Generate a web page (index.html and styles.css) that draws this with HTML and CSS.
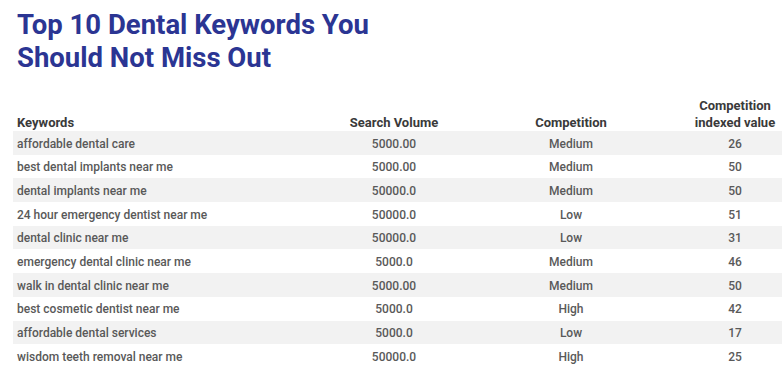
FILE: index.html
```html
<!DOCTYPE html>
<html>
<head>
<meta charset="utf-8">
<link rel="stylesheet" href="styles.css">
</head>
<body>
<div class="page">
  <h1 class="title">Top 10 Dental Keywords You<br>Should Not Miss Out</h1>
  <table class="kw-table">
    <colgroup>
      <col class="c-kw"><col class="c-vol"><col class="c-comp"><col class="c-idx">
    </colgroup>
    <thead>
      <tr>
        <th class="left">Keywords</th>
        <th>Search Volume</th>
        <th>Competition</th>
        <th>Competition<br>indexed value</th>
      </tr>
    </thead>
    <tbody>
      <tr class="alt"><td class="left">affordable dental care</td><td>5000.00</td><td>Medium</td><td>26</td></tr>
      <tr><td class="left">best dental implants near me</td><td>5000.00</td><td>Medium</td><td>50</td></tr>
      <tr class="alt"><td class="left">dental implants near me</td><td>50000.0</td><td>Medium</td><td>50</td></tr>
      <tr><td class="left">24 hour emergency dentist near me</td><td>50000.0</td><td>Low</td><td>51</td></tr>
      <tr class="alt"><td class="left">dental clinic near me</td><td>50000.0</td><td>Low</td><td>31</td></tr>
      <tr><td class="left">emergency dental clinic near me</td><td>5000.0</td><td>Medium</td><td>46</td></tr>
      <tr class="alt"><td class="left">walk in dental clinic near me</td><td>5000.00</td><td>Medium</td><td>50</td></tr>
      <tr><td class="left">best cosmetic dentist near me</td><td>5000.0</td><td>High</td><td>42</td></tr>
      <tr class="alt"><td class="left">affordable dental services</td><td>5000.0</td><td>Low</td><td>17</td></tr>
      <tr><td class="left">wisdom teeth removal near me</td><td>50000.0</td><td>High</td><td>25</td></tr>
    </tbody>
  </table>
</div>
</body>
</html>
```

FILE: styles.css
```css
html, body {
  margin: 0;
  padding: 0;
  background: #ffffff;
}

.page {
  padding: 8px 0 0 13px;
  font-family: Roboto, "Liberation Sans", sans-serif;
}

.title {
  margin: 0 0 23px 4px;
  font-size: 27.5px;
  line-height: 33px;
  font-weight: 700;
  color: #2b3593;
}

.kw-table {
  width: 769px;
  border-collapse: collapse;
  table-layout: fixed;
}

.c-kw { width: 321px; }
.c-vol { width: 120px; }
.c-comp { width: 234px; }
.c-idx { width: 94px; }

.kw-table th {
  font-size: 13px;
  font-weight: 700;
  color: #3a3a3a;
  line-height: 17px;
  padding: 0 4px;
  vertical-align: bottom;
  text-align: center;
}

.kw-table td {
  font-size: 12px;
  font-weight: 500;
  color: #595959;
  line-height: 16px;
  padding: 4.5px 4px 3.2px;
  text-align: center;
}

.kw-table .left {
  text-align: left;
}

.kw-table tr.alt td {
  background: #f2f2f2;
}
```
